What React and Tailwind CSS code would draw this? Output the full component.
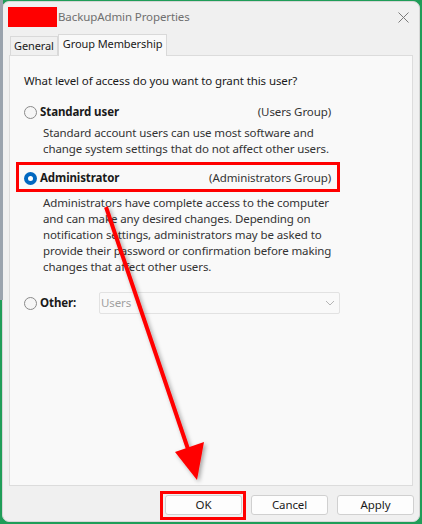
import React from 'react'

const font = { fontFamily: '"Segoe UI", "Noto Sans", Arial, sans-serif' }

function Radio({ checked }) {
  if (checked) {
    return (
      <span className="w-[13px] h-[13px] rounded-full bg-[#0067c0] flex items-center justify-center shrink-0">
        <span className="w-[5px] h-[5px] rounded-full bg-white" />
      </span>
    )
  }
  return <span className="w-[13px] h-[13px] rounded-full border border-[#8a8a8a] bg-[#f6f6f6] shrink-0" />
}

function Btn({ children }) {
  return (
    <button className="w-[77px] h-[20px] rounded-[3px] border border-[#d0d0d0] bg-[#fdfdfd] text-[11.5px] text-[#1b1b1b] flex items-center justify-center">
      {children}
    </button>
  )
}

export default function App() {
  return (
    <div className="relative w-[422px] h-[524px] bg-[#1f9d58] overflow-hidden text-[#1a1a1a] tracking-[-0.1px]" style={font}>
      <div className="absolute left-0 top-0 w-[3px] h-[300px] bg-[#9aa3ad]" />
      <div className="ml-[2px] mt-[1px] w-[418px] h-[521px] rounded-[7px] bg-[#f0f0f0] flex flex-col border border-[#d6d6d6]">
        {/* Title bar */}
        <div className="h-[30px] flex items-center shrink-0">
          <div className="ml-[5px] w-[49px] h-[20px] bg-[#ff0000]" />
          <span className="ml-[1px] text-[11.5px] text-[#6f6f6f]">BackupAdmin Properties</span>
          <span className="ml-auto mr-[9px] w-[14px] h-[14px] flex items-center justify-center">
            <svg width="11" height="11" viewBox="0 0 11 11" stroke="#7a7a7a" strokeWidth="1" fill="none">
              <path d="M0.5 0.5 L10.5 10.5 M10.5 0.5 L0.5 10.5" />
            </svg>
          </span>
        </div>

        {/* Tabs */}
        <div className="flex items-end pl-[7px] h-[23px] shrink-0 relative z-10">
          <div className="h-[19px] px-[3px] border border-b-0 border-[#d9d9d9] bg-[#f0f0f0] text-[11px] flex items-center">General</div>
          <div className="h-[22px] px-[4px] -mb-[1px] border border-b-0 border-[#d9d9d9] bg-[#f9f9f9] text-[11px] flex items-center pb-[2px]">Group Membership</div>
        </div>

        {/* Panel */}
        <div className="mx-[6px] h-[431px] border border-[#dcdcdc] bg-[#f9f9f9] pl-[14px] pt-[17px] text-[11.5px] leading-[16px]">
          <div>What level of access do you want to grant this user?</div>

          <div className="mt-[15px] w-[307px] flex items-center h-[16px]">
            <Radio />
            <span className="ml-[3px] font-bold">Standard user</span>
            <span className="ml-auto text-[#333]">(Users Group)</span>
          </div>
          <div className="mt-[5px] pl-[19px] text-[#333]">
            Standard account users can use most software and<br />
            change system settings that do not affect other users.
          </div>

          <div className="relative mt-[13px] w-[307px] flex items-center h-[16px]">
            <Radio checked />
            <span className="ml-[3px] font-bold">Administrator</span>
            <span className="ml-auto text-[#333]">(Administrators Group)</span>
            <div className="absolute left-[-8px] right-[-9px] top-[-8px] bottom-[-6px] border-[3px] border-[#ff0000]" />
          </div>
          <div className="mt-[9px] pl-[19px] text-[#333]">
            Administrators have complete access to the computer<br />
            and can make any desired changes. Depending on<br />
            notification settings, administrators may be asked to<br />
            provide their password or confirmation before making<br />
            changes that affect other users.
          </div>

          <div className="mt-[16px] flex items-center h-[24px]">
            <Radio />
            <span className="ml-[3px] w-[40px] font-bold">Other:</span>
            <div className="ml-[19px] w-[241px] h-[22px] border border-[#e2e2e2] bg-[#f9f9f9] rounded-[2px] flex items-center px-[1px] text-[#a0a0a0]">
              <span>Users</span>
              <svg className="ml-auto mr-[3px]" width="10" height="6" viewBox="0 0 10 6" fill="none" stroke="#b5b5b5" strokeWidth="1">
                <path d="M1 1 L5 5 L9 1" />
              </svg>
            </div>
          </div>
        </div>

        {/* Buttons */}
        <div className="flex justify-end gap-[9px] pr-[5px] mt-[9px]">
          <div className="relative">
            <Btn>OK</Btn>
            <div className="absolute left-[-5px] right-[-4px] top-[-4px] bottom-[-5px] border-[3px] border-[#ff0000]" />
          </div>
          <Btn>Cancel</Btn>
          <Btn>Apply</Btn>
        </div>
      </div>

      {/* Arrow annotation */}
      <svg className="absolute left-0 top-0 pointer-events-none" width="422" height="524">
        <defs>
          <filter id="sh" x="-20%" y="-20%" width="140%" height="140%">
            <feDropShadow dx="2" dy="2" stdDeviation="2" floodColor="#000" floodOpacity="0.35" />
          </filter>
        </defs>
        <g filter="url(#sh)">
          <line x1="106" y1="207" x2="189" y2="452" stroke="#ff0000" strokeWidth="4" />
          <polygon points="175,452 204,442 197,480" fill="#ff0000" />
        </g>
      </svg>
    </div>
  )
}
